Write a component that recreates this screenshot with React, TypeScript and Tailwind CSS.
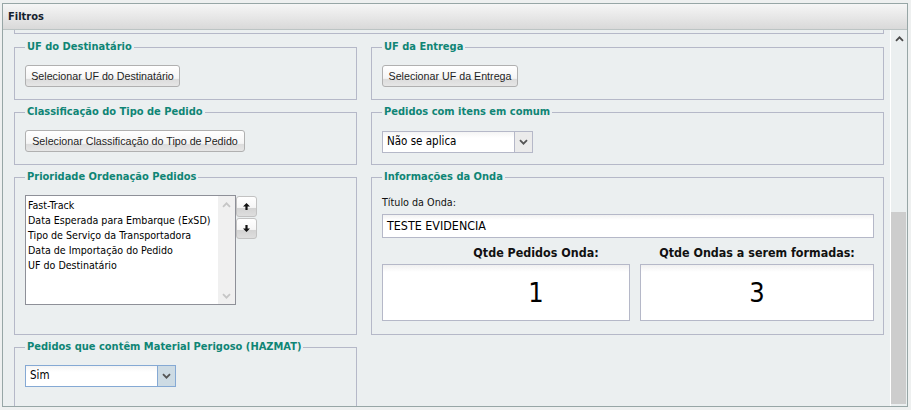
import React from "react";

function Chev({ dir = "down", color = "#4b4b4b", className = "" }: { dir?: "up" | "down"; color?: string; className?: string }) {
  return (
    <svg width="9" height="6" viewBox="0 0 9 6" className={className}>
      {dir === "down" ? (
        <path d="M1 1.2 L4.5 4.7 L8 1.2" fill="none" stroke={color} strokeWidth="1.8" />
      ) : (
        <path d="M1 4.8 L4.5 1.3 L8 4.8" fill="none" stroke={color} strokeWidth="1.8" />
      )}
    </svg>
  );
}

function Arrow({ dir }: { dir: "up" | "down" }) {
  return (
    <svg width="9" height="9" viewBox="0 0 9 9">
      {dir === "up" ? (
        <path d="M4.5 1 L8 4.6 H5.6 V8 H3.4 V4.6 H1 Z" fill="#111" />
      ) : (
        <path d="M4.5 8 L8 4.4 H5.6 V1 H3.4 V4.4 H1 Z" fill="#111" />
      )}
    </svg>
  );
}

function Box({ title, className = "", children }: { title: string; className?: string; children?: React.ReactNode }) {
  return (
    <fieldset className={"min-w-0 border border-[#b5b8c8] pl-[10px] pr-[9px] pt-[11px] " + className}>
      <legend className="px-[2px] text-[11px] leading-[14px] font-bold text-[#0f8575]">{title}</legend>
      {children}
    </fieldset>
  );
}

function Btn({ w, children }: { w: string; children: React.ReactNode }) {
  return (
    <div
      className={`h-[22px] ${w} rounded-[3px] border border-[#b0b0b0] bg-[linear-gradient(to_bottom,#ffffff_0%,#f5f5f5_62%,#dcdcdc_66%,#e6e6e6_100%)] flex items-center justify-center font-['Liberation_Sans',Arial,sans-serif] text-[10.7px] text-[#1e1e1e]`}
    >
      {children}
    </div>
  );
}

function Select({ value, focus = false }: { value: string; focus?: boolean }) {
  return (
    <div className={`flex h-[22px] w-[151px] border ${focus ? "border-[#85a9d4]" : "border-[#b5b8c8]"} bg-[linear-gradient(#f4f4f4,#ffffff_6px)]`}>
      <div className="flex-1 pl-[4px] flex items-center text-[11.5px] text-[#000]">{value}</div>
      <div className={`w-[18px] flex items-center justify-center border-l ${focus ? "border-[#85a9d4] bg-[#cddbe4]" : "border-[#b5b8c8] bg-[#ebebeb]"}`}>
        <Chev color="#555" />
      </div>
    </div>
  );
}

export default function App() {
  const items = [
    "Fast-Track",
    "Data Esperada para Embarque (ExSD)",
    "Tipo de Serviço da Transportadora",
    "Data de Importação do Pedido",
    "UF do Destinatário",
  ];
  return (
    <div className="w-[911px] h-[410px] bg-[#eef0f0] pt-[3px] pl-[2px] font-['DejaVu_Sans_Condensed','DejaVu_Sans',sans-serif] text-black">
      <div className="w-[906px] h-[404px] border border-[#97a6a6] flex flex-col bg-[#ebeff0]">
        <div className="h-[26px] shrink-0 border-b border-[#bcc4c4] bg-[linear-gradient(#f6f6f6,#d9d9d9)] pl-[5px] pt-[2px] flex items-center text-[11px] font-bold text-[#15212e]">
          Filtros
        </div>
        <div className="flex flex-1 min-h-0">
          <div className="flex-1 overflow-hidden pl-[11px] pr-[6px]">
            <div className="h-[4px] border-x border-b border-[#b5b8c8]" />
            <div className="mt-[6px] grid grid-cols-[343px_513px] gap-x-[14px] gap-y-[5px]">
              <Box title="UF do Destinatário" className="h-[60px]">
                <Btn w="w-[155px]">Selecionar UF do Destinatário</Btn>
              </Box>
              <Box title="UF da Entrega" className="h-[60px]">
                <Btn w="w-[136px]">Selecionar UF da Entrega</Btn>
              </Box>
              <Box title="Classificação do Tipo de Pedido" className="h-[60px]">
                <Btn w="w-[220px]">Selecionar Classificação do Tipo de Pedido</Btn>
              </Box>
              <Box title="Pedidos com itens em comum" className="h-[60px]">
                <div className="mt-[1px]">
                  <Select value="Não se aplica" />
                </div>
              </Box>
              <Box title="Prioridade Ordenação Pedidos" className="h-[165px]">
                <div className="flex">
                  <div className="w-[211px] h-[110px] border border-[#8e9098] bg-white flex">
                    <div className="flex-1 pt-[2px] pl-[2px] text-[10.6px] leading-[15px] text-black">
                      {items.map((t) => (
                        <div key={t} className="whitespace-nowrap">{t}</div>
                      ))}
                    </div>
                    <div className="w-[17px] bg-[#f0f0f0] flex flex-col items-center justify-between pt-[6px] pb-[5px]">
                      <Chev dir="up" color="#c6c6c6" />
                      <Chev dir="down" color="#c6c6c6" />
                    </div>
                  </div>
                  <div className="mt-[1px] flex flex-col gap-[1px]">
                    <div className="w-[21px] h-[21px] rounded-[3px] border border-[#c2c2c2] bg-[linear-gradient(to_bottom,#ffffff_0%,#f6f6f6_55%,#d3d3d3_60%,#dedede_100%)] flex items-center justify-center">
                      <Arrow dir="up" />
                    </div>
                    <div className="w-[21px] h-[21px] rounded-[3px] border border-[#c2c2c2] bg-[linear-gradient(to_bottom,#ffffff_0%,#f6f6f6_55%,#d3d3d3_60%,#dedede_100%)] flex items-center justify-center">
                      <Arrow dir="down" />
                    </div>
                  </div>
                </div>
              </Box>
              <Box title="Informações da Onda" className="h-[165px]">
                <div className="mt-[1px] text-[10.7px] leading-[14px] text-[#111]">Título da Onda:</div>
                <div className="mt-[4px] h-[24px] border border-[#b5b8c8] bg-[linear-gradient(#f2f2f2,#ffffff_5px)] flex items-center pl-[4px] text-[12.4px] text-black">
                  TESTE EVIDENCIA
                </div>
                <div className="mt-[7px] flex gap-[10px]">
                  <div className="w-[248px] flex flex-col">
                    <div className="pl-[60px] text-center font-bold text-[12.4px] leading-[15px] text-[#111]">Qtde Pedidos Onda:</div>
                    <div className="mt-[4px] h-[57px] border border-[#b5b8c8] bg-[linear-gradient(#f0f0f0,#ffffff_7px)] flex items-center justify-center pl-[60px] text-[27px] leading-none text-black">
                      1
                    </div>
                  </div>
                  <div className="w-[234px] flex flex-col">
                    <div className="text-center font-bold text-[12.4px] leading-[15px] text-[#111] whitespace-nowrap">Qtde Ondas a serem formadas:</div>
                    <div className="mt-[4px] h-[57px] border border-[#b5b8c8] bg-[linear-gradient(#f0f0f0,#ffffff_7px)] flex items-center justify-center text-[27px] leading-none text-black">
                      3
                    </div>
                  </div>
                </div>
              </Box>
              <Box title="Pedidos que contêm Material Perigoso (HAZMAT)" className="h-[90px]">
                <Select value="Sim" focus />
              </Box>
            </div>
          </div>
          <div className="w-[17px] shrink-0 border-l border-white flex flex-col">
            <div className="flex justify-center pt-[6px]">
              <Chev dir="up" color="#4a4a4a" />
            </div>
            <div className="mt-auto mb-[2px] w-[15px] h-[192px] bg-[#cdcdcd]" />
          </div>
        </div>
      </div>
    </div>
  );
}
